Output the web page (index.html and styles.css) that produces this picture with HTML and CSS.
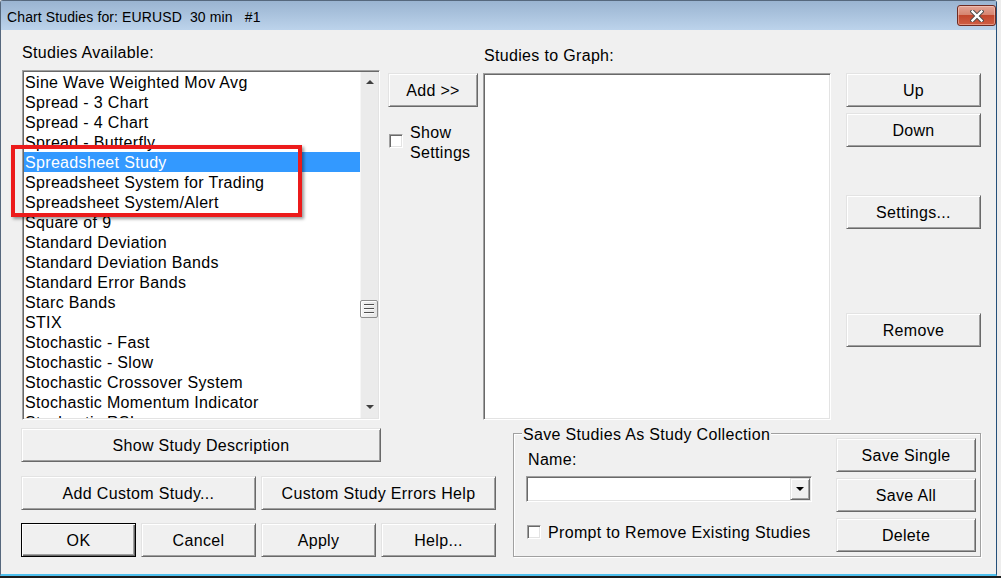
FILE: index.html
```html
<!DOCTYPE html>
<html lang="en">
<head>
<meta charset="utf-8">
<title>Chart Studies</title>
<link rel="stylesheet" href="styles.css">
</head>
<body>
<div class="window">
  <div class="titlebar">
    <span class="title">Chart Studies for: EURUSD  30 min   #1</span>
    <button class="close" aria-label="Close">
      <svg width="14" height="12" viewBox="0 0 14 12">
        <path d="M2.5 1.5 L11.5 10.5 M11.5 1.5 L2.5 10.5" stroke="#4a4a4a" stroke-width="4.2" stroke-linecap="square" fill="none"/>
        <path d="M2.5 1.5 L11.5 10.5 M11.5 1.5 L2.5 10.5" stroke="#ffffff" stroke-width="2.4" stroke-linecap="square" fill="none"/>
      </svg>
    </button>
  </div>
  <div class="client">
    <div class="top">
      <div class="col-avail">
        <div class="label">Studies Available:</div>
        <div class="listbox avail">
          <ul class="items">
            <li>Sine Wave Weighted Mov Avg</li>
            <li>Spread - 3 Chart</li>
            <li>Spread - 4 Chart</li>
            <li>Spread - Butterfly</li>
            <li class="selected">Spreadsheet Study</li>
            <li>Spreadsheet System for Trading</li>
            <li>Spreadsheet System/Alert</li>
            <li>Square of 9</li>
            <li>Standard Deviation</li>
            <li>Standard Deviation Bands</li>
            <li>Standard Error Bands</li>
            <li>Starc Bands</li>
            <li>STIX</li>
            <li>Stochastic - Fast</li>
            <li>Stochastic - Slow</li>
            <li>Stochastic Crossover System</li>
            <li>Stochastic Momentum Indicator</li>
            <li>Stochastic RSI</li>
          </ul>
          <div class="vscroll">
            <span class="arrow up"></span>
            <span class="track"><span class="thumb"></span></span>
            <span class="arrow down"></span>
          </div>
        </div>
        <div class="callout"></div>
      </div>
      <div class="col-add">
        <button class="btn">Add &gt;&gt;</button>
        <label class="check show"><span class="box"></span><span class="check-text">Show<br>Settings</span></label>
      </div>
      <div class="col-graph">
        <div class="label">Studies to Graph:</div>
        <div class="listbox graph"></div>
      </div>
      <div class="col-order">
        <button class="btn">Up</button>
        <button class="btn down">Down</button>
        <button class="btn settings">Settings...</button>
        <button class="btn remove">Remove</button>
      </div>
    </div>
    <div class="bottom">
      <div class="actions">
        <button class="btn describe">Show Study Description</button>
        <div class="row custom">
          <button class="btn">Add Custom Study...</button>
          <button class="btn">Custom Study Errors Help</button>
        </div>
        <div class="row main">
          <button class="btn default">OK</button>
          <button class="btn">Cancel</button>
          <button class="btn">Apply</button>
          <button class="btn">Help...</button>
        </div>
      </div>
      <div class="group">
        <span class="legend">Save Studies As Study Collection</span>
        <div class="group-left">
          <div class="name-label">Name:</div>
          <div class="combo"><span class="combo-btn"><span class="tri-down"></span></span></div>
          <label class="check prompt"><span class="box"></span><span class="check-text">Prompt to Remove Existing Studies</span></label>
        </div>
        <div class="group-right">
          <button class="btn">Save Single</button>
          <button class="btn">Save All</button>
          <button class="btn">Delete</button>
        </div>
      </div>
    </div>
  </div>
</div>
</body>
</html>
```
FILE: styles.css
```css
* { box-sizing: border-box; }

html, body { margin: 0; padding: 0; }

body {
  width: 1001px;
  height: 578px;
  overflow: hidden;
  background: linear-gradient(to bottom, #ededed 0, #ededed 576px, #1c1c1c 576px);
  font-family: "Liberation Sans", Arial, sans-serif;
  font-size: 16px;
  letter-spacing: 0.33px;
  color: #000;
}

.window {
  width: 997px;
  height: 576px;
  display: flex;
  flex-direction: column;
  background: #f0f0f0;
  border-left: 1px solid #56687d;
  border-top: 1px solid #56687d;
  border-right: 1px solid #24507a;
  border-bottom: 2px solid #4fc0ee;
  border-top-left-radius: 3px;
  border-top-right-radius: 3px;
}

/* title bar */
.titlebar {
  height: 29px;
  flex: none;
  display: flex;
  justify-content: space-between;
  align-items: flex-start;
  padding-left: 6px;
  background: linear-gradient(to bottom, #9ab4d1, #bcd3eb);
}

.title {
  margin-top: 8px;
  font-size: 14px;
  line-height: 16px;
  letter-spacing: 0.12px;
  white-space: pre;
}

.close {
  margin-top: 4px;
  width: 39px;
  height: 21px;
  padding: 0;
  border: 1px solid #6e2b22;
  border-radius: 3px;
  background: linear-gradient(to bottom, #e3a495 0, #d68571 45%, #c2472d 50%, #cf5e44 100%);
  box-shadow: inset 0 0 0 1px rgba(255, 220, 210, 0.45);
  display: flex;
  align-items: center;
  justify-content: center;
}

/* client area */
.client {
  flex: 1;
  padding-left: 20px;
}

.top {
  display: flex;
  align-items: flex-start;
}

.label {
  line-height: 18px;
  padding-left: 1px;
  padding-top: 1px;
}

.col-avail {
  position: relative;
  width: 359px;
  padding-top: 13px;
}

.col-avail .label { margin-bottom: 8px; }

.listbox {
  background: #fff;
  border: 1px solid;
  border-color: #a0a0a0 #fff #fff #a0a0a0;
  box-shadow: inset 1px 1px #696969, inset -1px -1px #e3e3e3;
}

.listbox.avail {
  margin-left: 1px;
  width: 358px;
  height: 350px;
  padding: 1px;
  display: flex;
  overflow: hidden;
}

.items {
  list-style: none;
  margin: 0;
  padding: 0;
  flex: 1;
  overflow: hidden;
}

.items li {
  height: 20px;
  line-height: 20px;
  padding-top: 1px;
  padding-left: 1px;
  white-space: nowrap;
  overflow: hidden;
}

.items li.selected {
  background: #3399ff;
  color: #fff;
}

.vscroll {
  width: 18px;
  display: flex;
  flex-direction: column;
  background: #ebebeb;
  border-left: 1px solid #f6f6f6;
}

.arrow {
  height: 20px;
  flex: none;
  display: flex;
  justify-content: center;
  align-items: flex-start;
}

.arrow.up { padding-top: 8px; }
.arrow.down { padding-top: 7px; }

.arrow.up::before {
  content: "";
  border-left: 4px solid transparent;
  border-right: 4px solid transparent;
  border-bottom: 4px solid #3f3f3f;
}

.arrow.down::before {
  content: "";
  border-left: 4px solid transparent;
  border-right: 4px solid transparent;
  border-top: 4px solid #3f3f3f;
}

.track {
  flex: 1;
  display: block;
}

.thumb {
  display: block;
  position: relative;
  margin-top: 208px;
  margin-left: -1px;
  height: 18px;
  border: 1px solid #8e8e8e;
  border-radius: 2px;
  background: linear-gradient(to right, #f4f4f4, #e4e4e4);
  box-shadow: inset 1px 1px #fff;
}

.thumb::before {
  content: "";
  position: absolute;
  left: 3px;
  right: 3px;
  top: 3px;
  height: 10px;
  background: repeating-linear-gradient(to bottom, #505050 0, #505050 1px, #fbfbfb 1px, #fbfbfb 2px, transparent 2px, transparent 4px);
}

.callout {
  position: absolute;
  left: -10px;
  top: 115px;
  width: 291px;
  height: 72px;
  border: 4px solid #ec1b1b;
  box-shadow: 2px 2px 3px rgba(0, 0, 0, 0.4);
  z-index: 1;
}

.col-add {
  width: 90px;
  margin-left: 8px;
  padding-top: 43px;
}

.col-graph {
  width: 348px;
  margin-left: 5px;
  padding-top: 16px;
}

.col-graph .label { margin-bottom: 8px; }

.listbox.graph {
  height: 347px;
}

.col-order {
  width: 135px;
  margin-left: 15px;
  padding-top: 43px;
}

.col-order .down { margin-top: 6px; }
.col-order .settings { margin-top: 48px; }
.col-order .remove { margin-top: 84px; }

/* buttons */
.btn {
  display: block;
  width: 100%;
  height: 34px;
  padding: 2px 0 0;
  font: inherit;
  letter-spacing: inherit;
  color: #000;
  background: #f0f0f0;
  border: 1px solid;
  border-color: #e3e3e3 #696969 #696969 #e3e3e3;
  box-shadow: inset 1px 1px #fff, inset -1px -1px #a0a0a0;
}

.btn.default {
  border-color: #000;
  box-shadow: inset 1px 1px #fff, inset -1px -1px #696969, inset -2px -2px #a0a0a0;
}

/* check boxes */
.check {
  display: flex;
  align-items: flex-start;
}

.box {
  flex: none;
  width: 14px;
  height: 14px;
  background: #fff;
  border: 1px solid;
  border-color: #a0a0a0 #fff #fff #a0a0a0;
  box-shadow: inset 1px 1px #696969, inset -1px -1px #e3e3e3;
}

.check.show {
  margin-top: 15px;
  margin-left: 1px;
}

.check.show .box { margin-top: 12px; }

.check.show .check-text {
  margin-left: 7px;
  line-height: 20px;
  padding-top: 1px;
}

/* bottom area */
.bottom {
  margin-top: 8px;
  display: flex;
  align-items: flex-start;
}

.actions { width: 475px; }

.actions .describe { width: 360px; }

.row {
  display: flex;
  gap: 5px;
}

.row .btn { flex: 1; }

.row.custom { margin-top: 14px; }
.row.main { margin-top: 13px; }

.group {
  position: relative;
  margin-left: 17px;
  margin-top: 5px;
  width: 468px;
  height: 124px;
  border: 1px solid #a0a0a0;
  box-shadow: inset 1px 1px #fff, 1px 1px #fff;
  display: flex;
  justify-content: space-between;
  padding: 4px 4px 0 12px;
}

.legend {
  position: absolute;
  top: -8px;
  left: 8px;
  padding: 0 1px;
  line-height: 18px;
  background: #f0f0f0;
  white-space: nowrap;
}

.group-left {
  width: 286px;
  padding-top: 12px;
}

.name-label {
  line-height: 18px;
  padding-left: 2px;
  padding-top: 1px;
  height: 19px;
}

.combo {
  margin-top: 7px;
  height: 26px;
  background: #fff;
  border: 1px solid;
  border-color: #a0a0a0 #fff #fff #a0a0a0;
  box-shadow: inset 1px 1px #696969, inset -1px -1px #e3e3e3;
  padding: 1px;
  display: flex;
  justify-content: flex-end;
}

.combo-btn {
  width: 20px;
  height: 22px;
  background: #f0f0f0;
  border: 1px solid;
  border-color: #e3e3e3 #696969 #696969 #e3e3e3;
  box-shadow: inset 1px 1px #fff, inset -1px -1px #a0a0a0;
  display: flex;
  align-items: center;
  justify-content: center;
}

.tri-down {
  border-left: 4px solid transparent;
  border-right: 4px solid transparent;
  border-top: 4px solid #000;
}

.check.prompt {
  margin-top: 21px;
  line-height: 18px;
}

.check.prompt .box { margin-left: 1px; margin-top: 2px; }
.check.prompt .check-text { margin-left: 7px; padding-top: 1px; white-space: nowrap; }

.group-right {
  width: 140px;
  display: flex;
  flex-direction: column;
  gap: 6px;
}
```
